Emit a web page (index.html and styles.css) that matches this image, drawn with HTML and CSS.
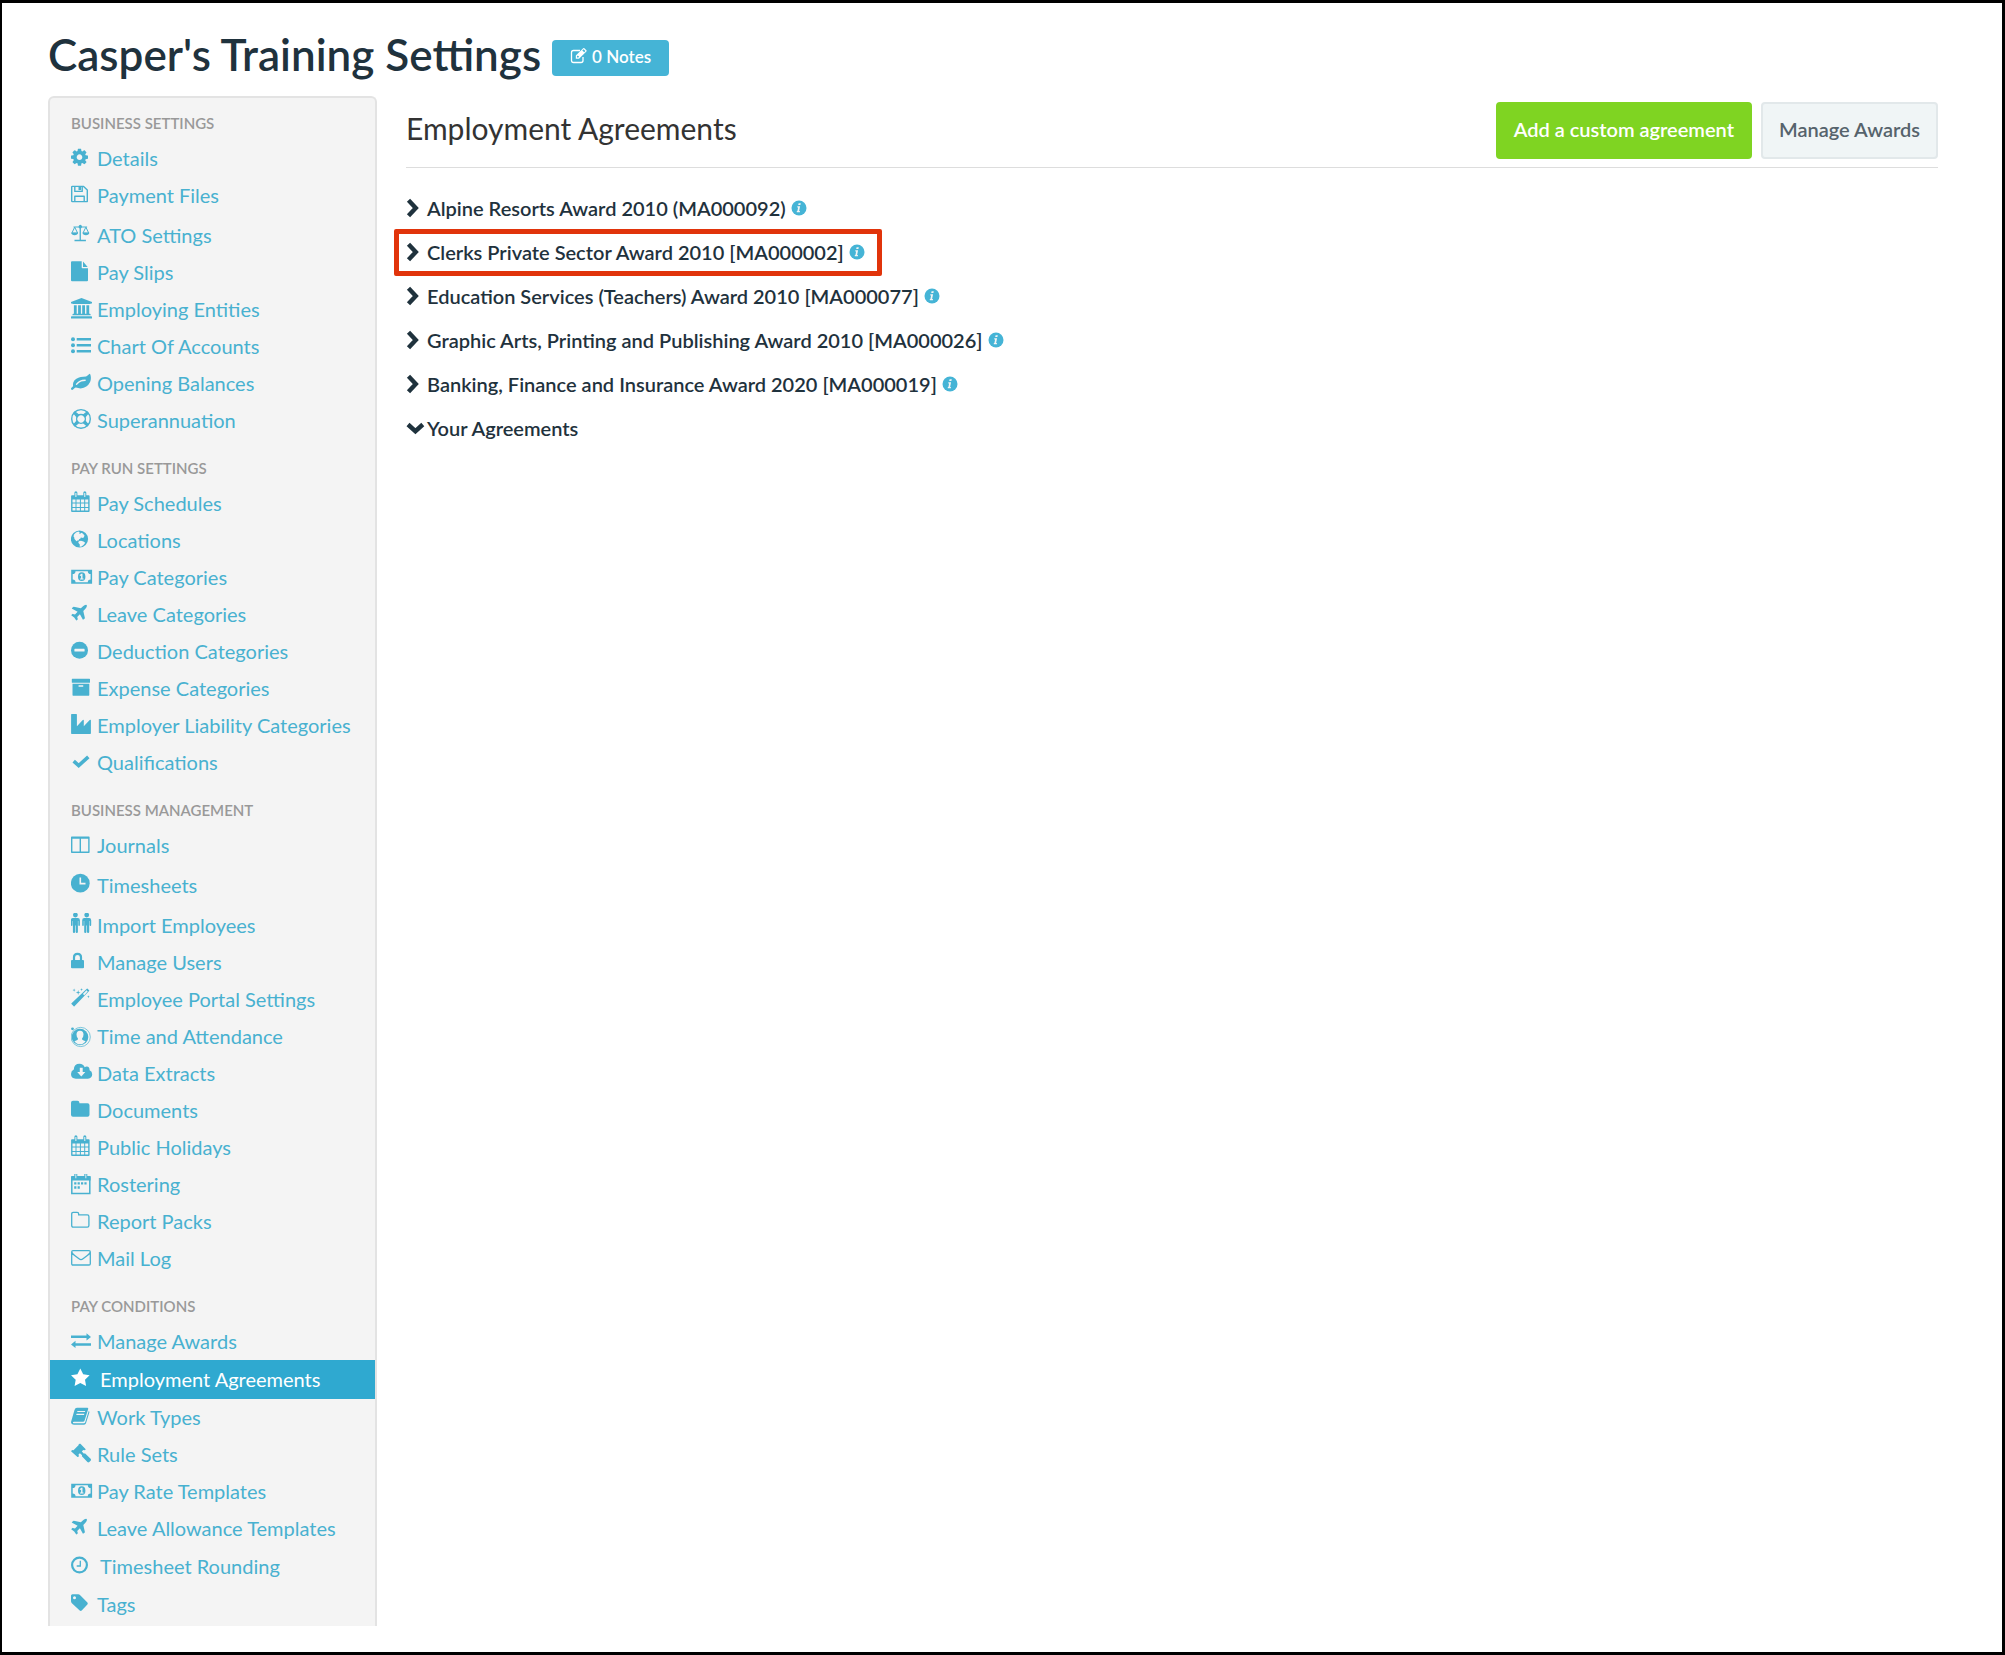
FILE: index.html
```html
<!DOCTYPE html>
<html lang="en">
<head>
    <meta charset="UTF-8">
    <meta name="viewport" content="width=device-width, initial-scale=1.0">
    <title>Employment Agreements</title>
    <link rel="stylesheet" href="styles.css">
</head>
<body>
    <!-- icon sprite -->
    <svg class="sprite" aria-hidden="true">
        <symbol id="cog" viewBox="0 -2 22 24"><path transform="translate(-1.42 -.72) scale(.01107)" d="M1152 896q0-106-75-181t-181-75-181 75-75 181 75 181 181 75 181-75 75-181zm512-109v222q0 12-8 23t-20 13l-185 28q-19 54-39 91 35 50 107 138 10 12 10 25t-9 23q-27 37-99 108t-94 71q-12 0-26-9l-138-108q-44 23-91 38-16 136-29 186-7 28-36 28h-222q-14 0-24.500-8.500t-11.500-21.500l-28-184q-49-16-90-37l-141 107q-10 9-25 9-14 0-25-11-126-114-165-168-7-10-7-23 0-12 8-23 15-21 51-66.500t54-70.500q-27-50-41-99l-183-27q-13-2-21-12.500t-8-23.500v-222q0-12 8-23t19-13l186-28q14-46 39-92-40-57-107-138-10-12-10-24 0-10 9-23 26-36 98.500-107.500t94.500-71.500q13 0 26 10l138 107q44-23 91-38 16-136 29-186 7-28 36-28h222q14 0 24.500 8.500t11.500 21.500l28 184q49 16 90 37l142-107q9-9 24-9 13 0 25 10 129 119 165 170 7 8 7 22 0 12-8 23-15 21-51 66.500t-54 70.500q26 50 41 98l183 28q13 2 21 12.500t8 23.500z"/></symbol>
        <symbol id="floppy" viewBox="0 -2 22 24"><path d="M.7 2.100q0-.7.700-.7h11.200l3.700 3.700v11.500H1.400q-.7 0-.7-.7zM3.800 1.400v5h7.400v-5M3.800 16.600v-5.400h9.400v5.400" fill="none" stroke="currentColor" stroke-width="1.400" stroke-linejoin="round"/><path d="M7.500 1.400h2.500v3.700H7.500z"/></symbol>
        <symbol id="scales" viewBox="0 -2 22 24"><path d="M2.500 1.400h5q.5-1.600 1.800-1.600t1.800 1.600h5v1.200h-5.200q-.3.700-1 .9v11.200h5v1.500H3.500v-1.500h5.100V3.500q-.8-.2-1-.9H2.500z"/><path d="M3.700 2.200L.9 8h5.700zM14.900 2.200L12 8h5.700z" fill="none" stroke="currentColor"/><path d="M.1 7.800h7q-.4 2.400-3.500 2.400T.1 7.800zM11.400 7.800h7q-.4 2.400-3.500 2.400t-3.500-2.400z"/></symbol>
        <symbol id="file" viewBox="0 -2 22 24"><path d="M1-.7h9.700v6.300q0 .7.700.7H17v12q0 1-1 1H1q-1 0-1-1V.3q0-1 1-1zM12-.4L16.700 5H12z"/></symbol>
        <symbol id="bank" viewBox="0 -2 22 24"><path d="M10.500-1L21 3v1.400h-1.400q0 .7-.8.700H2.200q-.8 0-.8-.7H0V3zM2.900 6.300h2.800v8.400h1.400V6.300h2.800v8.400h1.300V6.300H14v8.400h1.400V6.300h2.800v8.400h.7q.7 0 .7.700v.8H1.500v-.8q0-.7.700-.7h.7zM.7 17.200h19.600q.7 0 .7.700v1.600H0v-1.600q0-.7.700-.7z"/></symbol>
        <symbol id="list" viewBox="0 -2 22 24"><circle cx="2" cy="3.300" r="2"/><circle cx="2" cy="9.300" r="2"/><circle cx="2" cy="15.300" r="2"/><path d="M5.700 2H20v2.600H5.700zM5.700 8H20v2.600H5.700zM5.700 14H20v2.600H5.700z"/></symbol>
        <symbol id="leaf" viewBox="0 -2 22 24"><path fill-rule="evenodd" d="M18.700.7q.6 0 .9 1.700.8 3.600-.5 6.700Q16.300 15 9.600 15.400q-2.600 0-4.700-.8-.5-.1-1.800 1-1.200 1.400-1.900 1.400-.8 0-1.200-.9-.2-.8.700-1.700 1-1 1.400-1.500-.2-1-.1-1.800Q2 6.700 8 4.400q1.600-.5 4.300-.6 3.300 0 4.600-1.500Q18.200.7 18.700.7zM6 11.700q2-2.600 4.400-3.300 1.700-.5 3.800-.5.600 0 .6-.7 0-.6-.6-.6-3.200 0-5.500 1.200-2 1-3.600 2.900-.5.800 0 1.100.5.300.9-.1z"/></symbol>
        <symbol id="ring" viewBox="0 -2 22 24"><circle cx="10" cy="8.900" r="9.300" fill="none" stroke="currentColor" stroke-width="1.400"/><circle cx="10" cy="8.900" r="4.400" fill="none" stroke="currentColor" stroke-width="1.300"/><path d="M4 2l3.800 3L6 7 2.900 3.300zM16 2l-3.800 3L14 7l3.100-3.700zM4 15.800l3.800-3-1.800-2-3.100 3.700zM16 15.800l-3.800-3 1.800-2 3.100 3.700z" stroke="currentColor" stroke-width="1.200"/></symbol>
        <symbol id="calendar" viewBox="0 -2 22 24"><path d="M1 2.200h16.700q.9 0 .9.900v15q0 .9-.9.900H1q-.9 0-.9-.9v-15q0-.9.900-.9z"/><path d="M4.900-.2v4M13.800-.2v4" stroke="currentColor" stroke-width="3" stroke-linecap="round"/><path class="cut" d="M1.500 6.600h3v3h-3zM5.500 6.600h3.400v3H5.500zM9.900 6.600h3.300v3H9.900zM14.200 6.600h3v3h-3zM1.500 10.600h3V14h-3zM5.500 10.600h3.400V14H5.500zM9.900 10.600h3.300V14H9.900zM14.200 10.600h3V14h-3zM1.500 15h3v2.600h-3zM5.500 15h3.400v2.600H5.500zM9.900 15h3.300v2.600H9.900zM14.200 15h3v2.600h-3zM4.400 0h1v4h-1zM13.300 0h1v4h-1z"/></symbol>
        <symbol id="globe" viewBox="0 -2 22 24"><circle cx="8.500" cy="9" r="8.600"/><path class="cut" d="M3 4.400Q4.800 2 7.300 1.600l1.500.8-.8 1.100 1.300.3 1-1 1.500.8 1.700 2-.7 2-1.800.4-1-.7-.7 1.500-1.500.4.500 1.400-1.300-.3-1.500 1L3.500 9l-.4-1.900-.6-.7zM7.800 11.200l2.100-.5 2.600.9 1.700 1.100-1.500 2.100-2.200 1.800-1.800.2.100-2.400-1.500-1.700z"/></symbol>
        <symbol id="money" viewBox="0 -2 22 24"><path fill-rule="evenodd" d="M.2 2.700h20.900v14H.2zM4.500 4.200q0 2.800-2.800 2.800v5.400q2.800 0 2.800 2.800h12.300q0-2.800 2.800-2.800V7q-2.800 0-2.800-2.800z"/><ellipse cx="10.700" cy="9.700" rx="3.700" ry="4.400"/><path class="cut" d="M10.300 6.800h1.200v4.600h1v1.100H9v-1.100h1.100V8.600l-.8.500-.7-.8z"/></symbol>
        <symbol id="plane" viewBox="0 -2 22 24"><path d="M15.700 1q.5.700-.2 2.200-.5 1-3.200 3.700l1.600 7.200q.1.300-.2.500l-1.300 1q-.4.300-.6-.1L8.900 10.300l-2.700 2.600.6 2.200q0 .3-.1.400l-1 .8q-.4.200-.6-.1l-1.900-2.700-2.700-2q-.3-.2-.1-.5l1-1q.2-.2.400-.1l2.200.5L6.600 7.700 1.100 4.800q-.4-.3-.1-.7l1.300-1.200q.3-.2.500-.1L9.900 4.300Q12.400 1.900 13.500 1.200q1.700-.8 2.200-.2z"/></symbol>
        <symbol id="minus" viewBox="0 -2 22 24"><circle cx="8.500" cy="9.200" r="8.500"/><path class="cut" d="M4 7.800h9q.6 0 .6.600v1.600q0 .6-.6.600H4q-.6 0-.6-.6V8.400q0-.6.600-.6z"/></symbol>
        <symbol id="archive" viewBox="0 -2 22 24"><path d="M1.400.7h17q.6 0 .6.600v2.900q0 .6-.6.600h-17q-.6 0-.6-.6V1.300q0-.6.600-.6zM1.500 5.800h16.800v11.300q0 .6-.6.600H2.100q-.6 0-.6-.6z"/><path class="cut" d="M8 7.300h3.800q.6 0 .6.700t-.6.700H8q-.6 0-.6-.7t.6-.7z"/></symbol>
        <symbol id="industry" viewBox="0 -2 22 24"><path d="M.7-1h4.600q.6 0 .6.600v11.700l5.900-6.400q1-.6 1 .4v6l5.900-6.400q1.200-.6 1.200.4v13q0 .7-.6.700H.7q-.6 0-.6-.7V-.4Q.1-1 .7-1z"/></symbol>
        <symbol id="check" viewBox="0 -2 22 24"><path d="M2.700 9.100l5 4.500L17.300 4.800" fill="none" stroke="currentColor" stroke-width="3.600"/></symbol>
        <symbol id="columns" viewBox="0 -2 22 24"><path d="M.7 2.200h17.200v15H.7zM.7 3h17.200M9.300 2.500v14.500" fill="none" stroke="currentColor" stroke-width="1.400" stroke-linejoin="round"/></symbol>
        <symbol id="clock-solid" viewBox="0 -2 22 24"><circle cx="9.300" cy="8.200" r="9.400"/><path class="cut-line" d="M9.300 2.400v6.200h5.200" stroke-width="1.600"/></symbol>
        <symbol id="people" viewBox="0 -2 22 24"><g id="man"><circle cx="4.400" cy=".1" r="2.400"/><path d="M2 3h4.800q2.100 0 2.100 2.200v4.900q0 .9-.8.900t-.8-.9V5.900h-.4V17q0 1-1.100 1t-1.100-1v-6.400h-.6V17q0 1-1.100 1t-1.100-1V5.900h-.4v4.200q0 .9-.8.900t-.8-.9V5.200Q-.1 3 2 3z"/></g><use href="#man" x="11.300"/></symbol>
        <symbol id="lock" viewBox="0 -2 22 24"><path d="M1 8h11q1 0 1 1v6.300q0 1-1 1H1q-1 0-1-1V9q0-1 1-1z"/><path d="M3 8.500V5.200q0-3.400 3.500-3.400T10 5.200v3.300" fill="none" stroke="currentColor" stroke-width="2.200"/></symbol>
        <symbol id="magic" viewBox="0 -2 22 24"><path fill-rule="evenodd" d="M15.800-.3q.4-.3.800 0l1.500 1.600q.4.400 0 .8L3.500 17.200q-.4.400-.8 0L.5 15.100q-.4-.4 0-.8zM11.900 4.900l1.400 1.300 3.400-3.700-1.200-1.200z"/><path d="M3.100-.4l.4 1.200 1.200.3-1.200.4-.4 1.200-.4-1.200-1.200-.4 1.200-.3zM7.200 1l.5 1.900 1.900.6-1.900.6-.5 1.900-.6-1.900-1.900-.6 1.900-.6zM10.500-.9l.4 1.100 1.100.4-1.100.3-.4 1.100-.3-1.100L9.100.6l1.100-.4zM17.400 6.200l.4 1.200 1.200.3-1.200.4-.4 1.200-.4-1.200-1.200-.4 1.200-.3z"/></symbol>
        <symbol id="attendance" viewBox="0 -2 22 24"><circle cx="9" cy="11" r="8.300"/><circle cx="9.700" cy="11" r="9.600" fill="none" stroke="currentColor" stroke-width=".7"/><circle cx="1.500" cy="2.800" r="1.400"/><path class="cut" d="M9 4.700q3.500 0 3.500 3.900 0 2.300-1.400 3.700v1.200q.4.900 3.500 1.700-2 3.100-5.600 3.100t-5.600-3.100q3.100-.8 3.500-1.700v-1.200Q5.500 10.900 5.500 8.600q0-3.900 3.500-3.900z"/></symbol>
        <symbol id="cloud" viewBox="0 -2 22 24"><path d="M4.900 15.700Q0 15.300 0 10.900q0-3 2.800-4.400Q3 .7 8.500.7q3.900.1 5.200 3.600 1-.8 2.100-.7 2.900.3 2.800 3.600 2.600 1 2.600 4.100 0 4-4.300 4.400z"/><path class="cut" d="M8.800 4.700h2.900v4.400h2.600l-4 4.500-4.100-4.500h2.600z"/></symbol>
        <symbol id="folder" viewBox="0 -2 22 24"><path d="M2 .7h4.400q2 0 2 2v.6h8.100q2 0 2 2v9.400q0 2-2 2H2q-2 0-2-2v-12q0-2 2-2z"/></symbol>
        <symbol id="roster" viewBox="0 -2 22 24"><path d="M.8 3.600h18v16H.8z" fill="none" stroke="currentColor" stroke-width="1.500"/><path d="M.2 2h19.400v4.600H.2zM3.300 0h3v4h-3zM13.300 0h3v4h-3z"/><path d="M3.200 8.200h2.200v2.400H3.200zM6.600 8.200h2.200v2.400H6.600zM10 8.200h2.200v2.400H10zM13.400 8.200h2.200v2.400h-2.200zM3.200 12.300h2.200v2.400H3.200zM6.600 12.300h2.200v2.400H6.600z"/><path class="cut" d="M4.400.3h.9v4h-.9zM14.400.3h.9v4h-.9z"/></symbol>
        <symbol id="folder-o" viewBox="0 -2 22 24"><path d="M2.200 1.400h3.900q1.600 0 1.600 1.600v.9h8.600q1.600 0 1.600 1.600v9q0 1.600-1.600 1.600H2.300q-1.600 0-1.600-1.600V3q0-1.600 1.500-1.600z" fill="none" stroke="currentColor" stroke-width="1.300"/></symbol>
        <symbol id="mail" viewBox="0 -2 22 24"><path d="M2 2.700h16q1.300 0 1.300 1.300v11.700q0 1.300-1.300 1.300H2Q.7 17 .7 15.700V4Q.7 2.700 2 2.700zM1 4.500q.3 1.400 3 3.300l4 3q2 1.500 4 0l4-3q2.700-1.900 3-3.300" fill="none" stroke="currentColor" stroke-width="1.300"/></symbol>
        <symbol id="exchange" viewBox="0 -2 22 24"><path d="M0 4.600h15.500V2.300l4.500 3.600-4.500 3.600V7H0zM20 12.200H4.500V9.800L0 13.400 4.500 17v-2.300H20z"/></symbol>
        <symbol id="star" viewBox="0 -2 22 24"><path d="M9.300-.5l2.900 5.800 6.400.9-4.600 4.500 1.100 6.400-5.800-3-5.700 3 1.100-6.400L0 6.200l6.400-.9z"/></symbol>
        <symbol id="book" viewBox="0 -2 22 24"><path d="M6 .7h10.200q1.300 0 1 1.300L13.600 13.600q-.4 1.200-1.700 1.200H3q-1.300 0-1.100.6.200.9 1.300.9h9.700q1 0 1.300-1L17.700 3.900q.9.400.7 1.300L15 16.300q-.5 1.400-1.900 1.400H3.200Q.2 17.600 0 14.900L3.500 3Q4.100.7 6 .7z"/><path class="cut" d="M6.500 4h7.800l-.4 1.100H6.100zM5.600 6.800h7.800l-.4 1.100H5.200z"/></symbol>
        <symbol id="gavel" viewBox="0 -2 22 24"><path d="M8.600-.2q.4-.3.800 0l5.100 5.100q.4.400 0 .8l-1 .6-1.300-.4-1.400 1.500 2.200 2.300.9-.4 5.700 5.500q.8 1 0 1.900l-1.300 1.300q-1 .8-1.900 0l-5.500-5.700.2-1.100-2.200-2-1.400 1.400.4 1.300-.6 1q-.4.400-.8 0L.3 7.500q-.4-.4 0-.8l1.200-.8 1 .3 5.200-5.200-.2-.6z"/></symbol>
        <symbol id="clock" viewBox="0 -2 22 24"><circle cx="8.500" cy="9" r="7.400" fill="none" stroke="currentColor" stroke-width="2.200"/><path d="M9.300 4.800v5.200H5.700" fill="none" stroke="currentColor" stroke-width="1.300"/></symbol>
        <symbol id="tag" viewBox="0 -2 22 24"><path fill-rule="evenodd" d="M1.400.3h5.700q1.300.1 2.100.9l7.200 7.200q.8 1 0 2l-5.700 6.100q-1 .8-2 0L.9 9.300Q0 8.400 0 7V1.600Q.1.400 1.400.3zM3.500 2.200a1.500 1.500 0 100 3 1.500 1.500 0 000-3z"/></symbol>
        <symbol id="edit" viewBox="0 0 18 18"><path d="M13 10v3.500q0 2-2 2H3.500q-2 0-2-2v-8q0-2 2-2H10" fill="none" stroke="currentColor" stroke-width="1.300"/><path fill-rule="evenodd" d="M5.800 8.600l7.400-7.400q.6-.6 1.200 0l2 2q.6.600 0 1.200L9 11.800H5.800zM7 9.300v1.300h1.300l.8-.8-1.300-1.300zM12.300 3.400l1.900 1.900 1.200-1.200-1.800-1.900z"/></symbol>
        <symbol id="info" viewBox="0 0 16 16"><circle cx="8" cy="8" r="7.500"/><path class="cut" d="M7.600 3.200h2.200l-.4 1.900H7.200zM6.300 6.200h2.800l-1 4.800h.8v1.300H5.800V11h.6l.7-3.500h-.8z"/></symbol>
        <symbol id="right" viewBox="0 0 20 20"><path d="M2.500 2.200l7.300 7.800-7.300 7.800" fill="none" stroke="currentColor" stroke-width="4.400"/></symbol>
        <symbol id="down" viewBox="0 0 20 20"><path d="M2 6.500l7.400 6.700 7.400-6.700" fill="none" stroke="currentColor" stroke-width="4.400"/></symbol>
    </svg>

    <header class="page-header">
        <h1>Casper's Training Settings</h1>
        <button type="button" class="btn-notes"><svg><use href="#edit"/></svg>0 Notes</button>
    </header>

    <div class="layout">
        <nav class="sidebar">
            <h3>BUSINESS SETTINGS</h3>
            <ul>
                <li><a href="#"><svg><use href="#cog"/></svg>Details</a></li>
                <li><a href="#"><svg><use href="#floppy"/></svg>Payment Files</a></li>
                <li class="tall"><a href="#"><svg><use href="#scales"/></svg>ATO Settings</a></li>
                <li><a href="#"><svg><use href="#file"/></svg>Pay Slips</a></li>
                <li><a href="#"><svg><use href="#bank"/></svg>Employing Entities</a></li>
                <li><a href="#"><svg><use href="#list"/></svg>Chart Of Accounts</a></li>
                <li><a href="#"><svg><use href="#leaf"/></svg>Opening Balances</a></li>
                <li><a href="#"><svg><use href="#ring"/></svg>Superannuation</a></li>
            </ul>
            <h3>PAY RUN SETTINGS</h3>
            <ul>
                <li><a href="#"><svg><use href="#calendar"/></svg>Pay Schedules</a></li>
                <li><a href="#"><svg><use href="#globe"/></svg>Locations</a></li>
                <li><a href="#"><svg><use href="#money"/></svg>Pay Categories</a></li>
                <li><a href="#"><svg><use href="#plane"/></svg>Leave Categories</a></li>
                <li><a href="#"><svg><use href="#minus"/></svg>Deduction Categories</a></li>
                <li><a href="#"><svg><use href="#archive"/></svg>Expense Categories</a></li>
                <li><a href="#"><svg><use href="#industry"/></svg>Employer Liability Categories</a></li>
                <li><a href="#"><svg><use href="#check"/></svg>Qualifications</a></li>
            </ul>
            <h3>BUSINESS MANAGEMENT</h3>
            <ul>
                <li><a href="#"><svg><use href="#columns"/></svg>Journals</a></li>
                <li class="tall"><a href="#"><svg><use href="#clock-solid"/></svg>Timesheets</a></li>
                <li class="tall"><a href="#"><svg><use href="#people"/></svg>Import Employees</a></li>
                <li><a href="#"><svg><use href="#lock"/></svg>Manage Users</a></li>
                <li><a href="#"><svg><use href="#magic"/></svg>Employee Portal Settings</a></li>
                <li><a href="#"><svg><use href="#attendance"/></svg>Time and Attendance</a></li>
                <li><a href="#"><svg><use href="#cloud"/></svg>Data Extracts</a></li>
                <li><a href="#"><svg><use href="#folder"/></svg>Documents</a></li>
                <li><a href="#"><svg><use href="#calendar"/></svg>Public Holidays</a></li>
                <li><a href="#"><svg><use href="#roster"/></svg>Rostering</a></li>
                <li><a href="#"><svg><use href="#folder-o"/></svg>Report Packs</a></li>
                <li><a href="#"><svg><use href="#mail"/></svg>Mail Log</a></li>
            </ul>
            <h3>PAY CONDITIONS</h3>
            <ul>
                <li><a href="#"><svg><use href="#exchange"/></svg>Manage Awards</a></li>
                <li class="wide active"><a href="#"><svg><use href="#star"/></svg>Employment Agreements</a></li>
                <li><a href="#"><svg><use href="#book"/></svg>Work Types</a></li>
                <li><a href="#"><svg><use href="#gavel"/></svg>Rule Sets</a></li>
                <li><a href="#"><svg><use href="#money"/></svg>Pay Rate Templates</a></li>
                <li><a href="#"><svg><use href="#plane"/></svg>Leave Allowance Templates</a></li>
                <li class="wide"><a href="#"><svg><use href="#clock"/></svg>Timesheet Rounding</a></li>
                <li><a href="#"><svg><use href="#tag"/></svg>Tags</a></li>
            </ul>
        </nav>

        <main class="content">
            <div class="content-header">
                <h2>Employment Agreements</h2>
                <button type="button" class="btn btn-add">Add a custom agreement</button>
                <button type="button" class="btn btn-manage">Manage Awards</button>
            </div>
            <ul class="awards">
                <li><button type="button"><svg class="arrow"><use href="#right"/></svg>Alpine Resorts Award 2010 (MA000092)</button><svg class="info"><use href="#info"/></svg></li>
                <li class="highlight"><button type="button"><svg class="arrow"><use href="#right"/></svg>Clerks Private Sector Award 2010 [MA000002]</button><svg class="info"><use href="#info"/></svg></li>
                <li><button type="button"><svg class="arrow"><use href="#right"/></svg>Education Services (Teachers) Award 2010 [MA000077]</button><svg class="info"><use href="#info"/></svg></li>
                <li><button type="button"><svg class="arrow"><use href="#right"/></svg>Graphic Arts, Printing and Publishing Award 2010 [MA000026]</button><svg class="info"><use href="#info"/></svg></li>
                <li><button type="button"><svg class="arrow"><use href="#right"/></svg>Banking, Finance and Insurance Award 2020 [MA000019]</button><svg class="info"><use href="#info"/></svg></li>
                <li><button type="button"><svg class="arrow"><use href="#down"/></svg>Your Agreements</button></li>
            </ul>
        </main>
    </div>
</body>
</html>
```
FILE: styles.css
```css
* {
    box-sizing: border-box;
}
body {
    margin: 0;
    min-height: 100vh;
    padding: 25px 64px 24px 46px;
    border: 3px solid #000;
    border-left-width: 2px;
    background-color: #fff;
    color: #1f323d;
    font-family: Lato, sans-serif;
    font-size: 20px;
}
h1, h2, h3, ul {
    margin: 0;
    padding: 0;
    font-weight: normal;
}
ul {
    list-style: none;
}
button {
    font-family: inherit;
    cursor: pointer;
}
svg {
    flex: none;
    fill: currentColor;
    overflow: visible;
}
.sprite {
    display: none;
}
.cut {
    fill: #f4f4f4;
}
.cut-line {
    fill: none;
    stroke: #f4f4f4;
}

/* page title */
.page-header {
    display: flex;
    align-items: center;
    gap: 11px;
    height: 52px;
}
.page-header h1 {
    font-size: 44px;
    font-weight: 600;
}
.btn-notes {
    display: flex;
    align-items: center;
    justify-content: center;
    gap: 4px;
    height: 36px;
    padding: 0 18px 4px;
    border: none;
    border-radius: 4px;
    margin-top: 8px;
    background-color: #45b4d6;
    color: #fff;
    font-size: 17px;
    font-weight: 600;
}
.btn-notes svg {
    width: 18px;
    height: 18px;
}

.layout {
    display: flex;
    align-items: flex-start;
    gap: 29px;
    margin-top: 16px;
}

/* sidebar */
.sidebar {
    flex: 0 0 329px;
    padding: 8px 0 3px;
    border: 2px solid #e3e3e3;
    border-bottom: none;
    border-radius: 6px 6px 0 0;
    background-color: #f4f4f4;
}
.sidebar h3 {
    padding-left: 21px;
    margin-top: 12px;
    color: #999;
    font-size: 15px;
    font-weight: 600;
    line-height: 34px;
}
.sidebar h3:first-child {
    margin-top: 0;
}
.sidebar a {
    display: flex;
    align-items: center;
    gap: 4px;
    height: 37px;
    padding: 0 0 2px 21px;
    color: #48b1d0;
    text-decoration: none;
    white-space: nowrap;
}
.sidebar svg {
    width: 22px;
    height: 24px;
}
.sidebar .tall {
    padding-top: 3px;
}
.sidebar .wide a {
    gap: 7px;
    height: 39px;
}
.sidebar .active a {
    background-color: #2fa9d0;
    color: #fff;
}

/* main column */
.content {
    flex: 1;
    min-width: 0;
}
.content-header {
    display: flex;
    align-items: center;
    gap: 9px;
    padding: 6px 0 8px;
    border-bottom: 1px solid #ddd;
}
.content-header h2 {
    flex: 1;
    padding-bottom: 6px;
    color: #333;
    font-size: 30px;
}
.btn {
    height: 57px;
    padding: 0 16px 3px;
    border: 2px solid #7fd422;
    border-radius: 4px;
    font-size: 20px;
    font-weight: 600;
}
.btn-add {
    background-color: #7fd422;
    color: #fff;
}
.btn-manage {
    border-color: #e2e8ea;
    background-color: #f0f5f6;
    color: #56636c;
}
.awards {
    padding-top: 18px;
}
.awards li {
    display: flex;
    align-items: center;
    gap: 5px;
    position: relative;
    width: fit-content;
    height: 44px;
}
.awards button {
    display: flex;
    align-items: center;
    gap: 1px;
    padding: 0;
    border: none;
    background: none;
    color: #1f323d;
    font-size: 20px;
    font-weight: 600;
}
.awards .arrow {
    width: 20px;
    height: 20px;
}
.awards .info {
    width: 16px;
    height: 16px;
    color: #45b4d6;
}
.awards .cut {
    fill: #fff;
}
.highlight::after {
    content: "";
    position: absolute;
    inset: -1px -17px -2px -12px;
    border: 5px solid #e1340b;
    border-radius: 2px;
}
```
